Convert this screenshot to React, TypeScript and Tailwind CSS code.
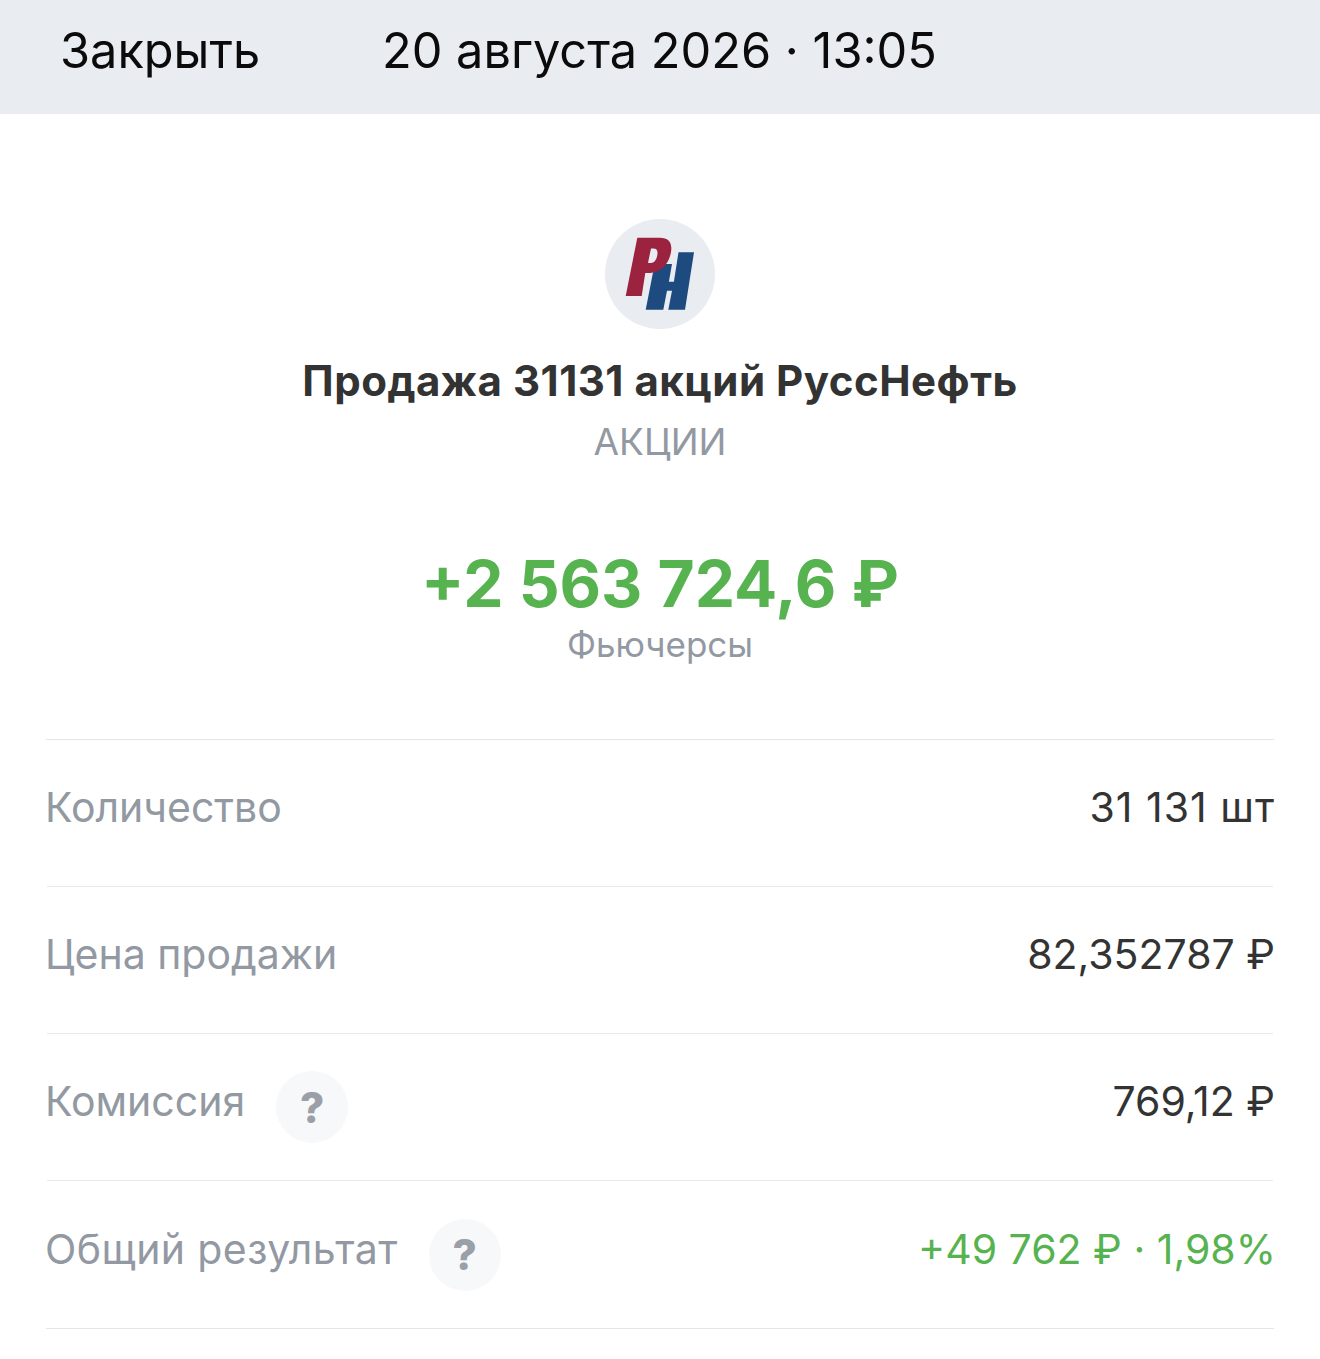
const rows = [
  { label: 'Количество', value: '31 131 шт', valueClass: 'tracking-[1px] text-[#333333]' },
  { label: 'Цена продажи', value: '82,352787 ₽', valueClass: 'text-[#333333]' },
  { label: 'Комиссия', value: '769,12 ₽', help: 'ml-[31px]', valueClass: 'text-[#333333]' },
  {
    label: 'Общий результат',
    value: '+49 762 ₽ · 1,98%',
    help: 'ml-[31px]',
    labelClass: 'tracking-[0.4px]',
    valueClass: 'text-[#56b34f]',
  },
];

function Logo() {
  return (
    <svg width="110" height="110" viewBox="0 0 110 110" className="block">
      <circle cx="55" cy="55" r="55" fill="#e9edf1" />
      <path
        fill="#1d4a7f"
        d="M40.7 90.7 L48 53.5 L60 45 L67 45 L63.9 62.7 L68.9 62.7 L73.5 33.3 L89 33.3 L80 90.7 L63.3 90.7 L67 71.7 L62 71.7 L58.3 90.7 Z"
      />
      <path
        fill="#9c2340"
        fillRule="evenodd"
        d="M32.3 18.7 L55 18.7 C64 18.7 67.5 24 66 33 C64 45 56 53.5 45 54 L40.3 54 L36.7 77 L20.7 77 Z M46 29.5 L43 44 L46 44 C50 44 52.5 39 52.5 33.5 C52.5 30.8 51 29.5 48.5 29.5 Z"
      />
    </svg>
  );
}

export default function App() {
  return (
    <div className="h-[1359px] overflow-hidden bg-white font-['Inter',sans-serif]">
      <div className="flex h-[114px] items-center bg-[#e9edf1] pb-[13px] pl-[60px] text-[48.7px] text-[#0b0b0b]">
        <span className="w-[322px]">Закрыть</span>
        <span>20 августа 2026 · 13:05</span>
      </div>
      <div className="flex flex-col items-center pt-[105px]">
        <Logo />
        <h1 className="mt-[26px] text-[42px] leading-[52px] font-bold tracking-[0.5px] text-[#333333]">
          Продажа 31131 акций РуссНефть
        </h1>
        <div className="mt-[14px] text-[37px] leading-[42px] text-[#9299a2]">АКЦИИ</div>
        <div className="mt-[82px] text-[64px] leading-[78px] font-bold text-[#56b34f]">
          +2 563 724,6 ₽
        </div>
        <div className="mt-[1px] text-[35px] leading-[40px] text-[#9299a2]">Фьючерсы</div>
      </div>
      <div className="mx-[46px] mt-[75px] border-t border-[#e4e6e9]">
        {rows.map((row, index) => (
          <div
            key={row.label}
            className={`flex items-center justify-between border-b pb-[10px] text-[41px] ${
              index === 3 ? 'h-[148px] border-[#e4e6e9]' : 'mx-[1px] h-[147px] border-[#e7e9ec]'
            }`}
          >
            <div className={`flex items-center text-[#9299a2] ${index === 3 ? '-ml-[1px]' : '-ml-[2px]'}`}>
              <span className={row.labelClass}>{row.label}</span>
              {row.help && (
                <span
                  className={`mt-[10px] flex size-[72px] items-center justify-center rounded-full bg-[#f7f8f9] text-[42px] font-extrabold text-[#9a9fa8] ${row.help}`}
                >
                  ?
                </span>
              )}
            </div>
            <span className={`-mr-[2px] ${row.valueClass}`}>{row.value}</span>
          </div>
        ))}
      </div>
    </div>
  );
}
